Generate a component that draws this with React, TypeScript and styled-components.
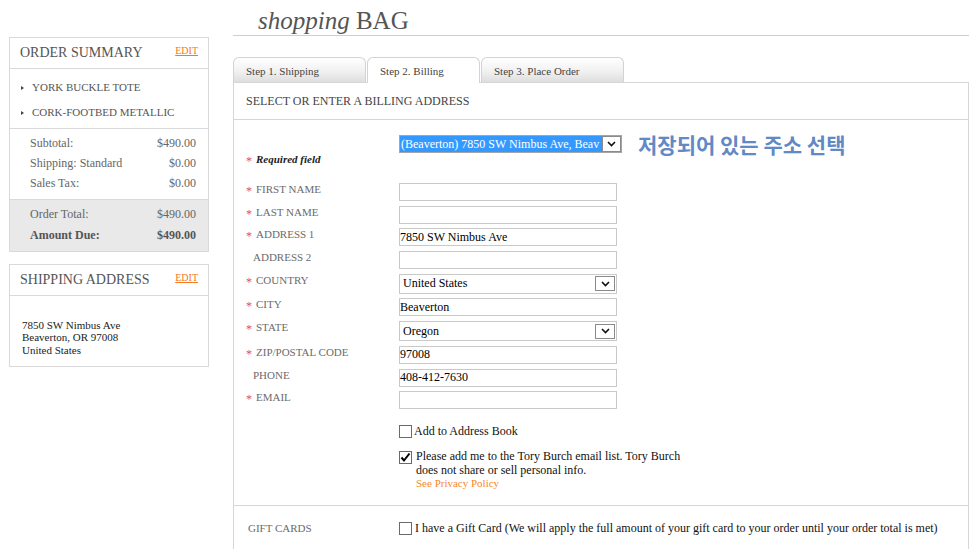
import React from "react";
import styled, { createGlobalStyle } from "styled-components";

const Global = createGlobalStyle`
  html, body { margin: 0; padding: 0; background: #fff; }
  body { font-family: "Liberation Serif", "Times New Roman", serif; color: #555; }
  * { box-sizing: border-box; }
`;

const Page = styled.div`
  display: flex;
  align-items: flex-start;
  gap: 24px;
  padding-left: 9px;
  width: 970px;
  height: 549px;
  overflow: hidden;
`;

/* ---------- Sidebar ---------- */
const Sidebar = styled.aside`
  width: 200px;
  flex: none;
  margin-top: 37px;
  display: flex;
  flex-direction: column;
  gap: 12px;
`;

const Card = styled.section`
  border: 1px solid #d9d9d9;
  background: #fff;
`;

const CardHeader = styled.div`
  height: 31px;
  border-bottom: 1px solid #d9d9d9;
  display: flex;
  justify-content: space-between;
  align-items: flex-start;
  padding: 0 10px;
`;

const CardTitle = styled.h2`
  margin: 0;
  font-weight: normal;
  font-size: 14px;
  line-height: 30px;
  color: #555;
`;

const EditLink = styled.a`
  font-size: 10px;
  line-height: 12px;
  margin-top: 7px;
  color: #f47920;
  text-decoration: underline;
`;

const ItemList = styled.ul`
  list-style: none;
  margin: 0;
  padding: 6px 0 3px 11px;
  border-bottom: 1px solid #d9d9d9;
`;

const Item = styled.li`
  display: flex;
  align-items: center;
  gap: 8px;
  font-size: 11px;
  line-height: 25px;
  color: #555;
`;

const Bullet = styled.span`
  width: 0;
  height: 0;
  border-left: 3px solid #444;
  border-top: 2.5px solid transparent;
  border-bottom: 2.5px solid transparent;
`;

const Totals = styled.div<{ $shade?: boolean }>`
  padding: ${(p) => (p.$shade ? "4px 12px 5px 20px" : "4px 12px 6px 20px")};
  background: ${(p) => (p.$shade ? "#e9e9e9" : "#fff")};
  border-bottom: ${(p) => (p.$shade ? "none" : "1px solid #d9d9d9")};
`;

const TotalRow = styled.div<{ $strong?: boolean; $tall?: boolean }>`
  display: flex;
  justify-content: space-between;
  font-size: 12px;
  line-height: ${(p) => (p.$tall ? "21px" : "20px")};
  font-weight: ${(p) => (p.$strong ? "bold" : "normal")};
  color: ${(p) => (p.$strong ? "#555" : "#666")};
`;

const AddressBody = styled.div`
  padding: 23px 12px 10px;
  font-size: 11px;
  line-height: 12.4px;
  color: #222;
`;

/* ---------- Main ---------- */
const Main = styled.main`
  width: 736px;
  flex: none;
`;

const TitleBar = styled.div`
  height: 36px;
  border-bottom: 1px solid #cfcfcf;
  display: flex;
  align-items: flex-end;
  padding: 0 0 2px 25px;
`;

const Title = styled.h1`
  margin: 0;
  font-weight: normal;
  font-size: 25px;
  line-height: 25px;
  color: #555;
  em { font-style: italic; }
`;

const TabRow = styled.div`
  margin-top: 21px;
  height: 25px;
  display: flex;
  align-items: flex-start;
  gap: 1px;
`;

const Tab = styled.div<{ $w: number; $active?: boolean }>`
  width: ${(p) => p.$w}px;
  height: ${(p) => (p.$active ? 26 : 25)}px;
  border: 1px solid #d3d3d3;
  border-bottom: none;
  border-radius: 6px 6px 0 0;
  background: ${(p) =>
    p.$active ? "#fff" : "linear-gradient(#ffffff, #f1f1f1 55%, #dedede)"};
  position: relative;
  z-index: ${(p) => (p.$active ? 1 : 0)};
  padding: 7px 0 0 12px;
  font-size: 11px;
  line-height: 13px;
  color: #444;
  white-space: nowrap;
`;

const Panel = styled.div`
  border: 1px solid #d6d6d6;
  background: #fff;
`;

const PanelHeader = styled.div`
  height: 37px;
  border-bottom: 1px solid #d6d6d6;
  padding-left: 12px;
  font-size: 12px;
  line-height: 36px;
  color: #444;
`;

const FormSection = styled.div`
  padding: 15px 0 14px 12px;
`;

const FieldRow = styled.div<{ $gap?: number }>`
  display: grid;
  grid-template-columns: 153px 1fr;
  align-items: start;
  margin-top: ${(p) => p.$gap ?? 0}px;
`;

const Picker = styled.div`
  display: flex;
  align-items: flex-start;
`;

const AddressSelect = styled.div`
  flex: none;
  width: 223px;
  height: 18px;
  border: 1px solid #a5a5a5;
  display: flex;
  background: #fff;
  overflow: hidden;
`;

const Highlight = styled.div`
  flex: 1;
  min-width: 0;
  background: #3399ff;
  color: #fff;
  font-size: 12px;
  line-height: 16px;
  padding-left: 1px;
  white-space: nowrap;
  overflow: hidden;
`;

const ArrowBox = styled.span<{ $w: number; $h: number }>`
  flex: none;
  width: ${(p) => p.$w}px;
  height: ${(p) => p.$h}px;
  border: 1px solid #8a8a8a;
  background: #fff;
  display: flex;
  align-items: center;
  justify-content: center;
`;

const Note = styled.span`
  margin: -3px 0 -3px 16px;
  font-family: "Noto Sans CJK KR", "Noto Sans", sans-serif;
  font-weight: bold;
  font-size: 21px;
  line-height: 24px;
  color: #6089c6;
  white-space: nowrap;
`;

const RequiredNote = styled.div`
  display: flex;
  margin-bottom: 15px;
  font-size: 11px;
  line-height: 13px;
  font-weight: bold;
  font-style: italic;
  color: #222;
`;

const Star = styled.span`
  flex: none;
  width: 10px;
  padding-top: 2px;
  font-style: normal;
  font-weight: normal;
  font-size: 12px;
  line-height: 13px;
  color: #e0457b;
`;

const Spacer = styled.span`
  flex: none;
  width: 7px;
`;

const FieldList = styled.div`
  display: flex;
  flex-direction: column;
  gap: 4.7px;
`;

const Label = styled.label`
  display: flex;
  font-size: 11px;
  line-height: 13px;
  color: #6b6b6b;
  white-space: nowrap;
`;

const TextInput = styled.input`
  width: 218px;
  height: 18px;
  border: 1px solid #c9c9c9;
  padding: 0;
  margin: 0;
  font-family: "Liberation Serif", "Times New Roman", serif;
  font-size: 12px;
  color: #000;
  background: #fff;
  outline: none;
`;

const SelectBox = styled.div`
  width: 218px;
  height: 20px;
  border: 1px solid #c9c9c9;
  display: flex;
  align-items: center;
  justify-content: space-between;
  padding: 0 1px 0 3px;
  font-size: 12px;
  color: #000;
  background: #fff;
`;

const OptionList = styled.div`
  display: flex;
  flex-direction: column;
  gap: 13px;
`;

const OptionItem = styled.label<{ $top?: boolean; $gap?: number }>`
  display: flex;
  align-items: ${(p) => (p.$top ? "flex-start" : "center")};
  gap: ${(p) => p.$gap ?? 2}px;
  font-size: 12px;
  line-height: 13px;
  color: #111;
`;

const Box = styled.span`
  flex: none;
  width: 13px;
  height: 13px;
  border: 1px solid #6a6a6a;
  background: #fff;
  display: flex;
  align-items: center;
  justify-content: center;
`;

const OptionText = styled.span`
  width: 275px;
  margin-top: -0.5px;
  line-height: 13.5px;
`;

const Privacy = styled.a`
  display: block;
  font-size: 11px;
  color: #f58a1f;
  text-decoration: none;
`;

const GiftSection = styled.div`
  border-top: 1px solid #d6d6d6;
  padding: 16px 0 60px 14px;
  display: grid;
  grid-template-columns: 151px 1fr;
  align-items: center;
`;

const GiftLabel = styled.span`
  font-size: 11px;
  line-height: 13px;
  color: #6b6b6b;
`;

const Chevron = () => (
  <svg width="9" height="6" viewBox="0 0 9 6">
    <path d="M1 1 L4.5 4.5 L8 1" fill="none" stroke="#111" strokeWidth="1.6" />
  </svg>
);

const Check = ({ checked }: { checked?: boolean }) => (
  <Box>
    {checked && (
      <svg width="11" height="11" viewBox="0 0 11 11">
        <path d="M1.5 5.5 L4 8.5 L9.5 1.5" fill="none" stroke="#000" strokeWidth="2" />
      </svg>
    )}
  </Box>
);

type Field = { label: string; req: boolean; value?: string; select?: boolean };

const fields: Field[] = [
  { label: "FIRST NAME", req: true },
  { label: "LAST NAME", req: true },
  { label: "ADDRESS 1", req: true, value: "7850 SW Nimbus Ave" },
  { label: "ADDRESS 2", req: false },
  { label: "COUNTRY", req: true, value: "United States", select: true },
  { label: "CITY", req: true, value: "Beaverton" },
  { label: "STATE", req: true, value: "Oregon", select: true },
  { label: "ZIP/POSTAL CODE", req: true, value: "97008" },
  { label: "PHONE", req: false, value: "408-412-7630" },
  { label: "EMAIL", req: true },
];

export default function App() {
  return (
    <>
      <Global />
      <Page>
        <Sidebar>
          <Card>
            <CardHeader>
              <CardTitle>ORDER SUMMARY</CardTitle>
              <EditLink>EDIT</EditLink>
            </CardHeader>
            <ItemList>
              <Item><Bullet />YORK BUCKLE TOTE</Item>
              <Item><Bullet />CORK-FOOTBED METALLIC</Item>
            </ItemList>
            <Totals>
              <TotalRow><span>Subtotal:</span><span>$490.00</span></TotalRow>
              <TotalRow><span>Shipping: Standard</span><span>$0.00</span></TotalRow>
              <TotalRow><span>Sales Tax:</span><span>$0.00</span></TotalRow>
            </Totals>
            <Totals $shade>
              <TotalRow $tall><span>Order Total:</span><span>$490.00</span></TotalRow>
              <TotalRow $tall $strong><span>Amount Due:</span><span>$490.00</span></TotalRow>
            </Totals>
          </Card>
          <Card>
            <CardHeader>
              <CardTitle>SHIPPING ADDRESS</CardTitle>
              <EditLink>EDIT</EditLink>
            </CardHeader>
            <AddressBody>
              7850 SW Nimbus Ave<br />
              Beaverton, OR 97008<br />
              United States
            </AddressBody>
          </Card>
        </Sidebar>

        <Main>
          <TitleBar>
            <Title><em>shopping</em> BAG</Title>
          </TitleBar>
          <TabRow>
            <Tab $w={133}>Step 1. Shipping</Tab>
            <Tab $w={113} $active>Step 2. Billing</Tab>
            <Tab $w={143}>Step 3. Place Order</Tab>
          </TabRow>
          <Panel>
            <PanelHeader>SELECT OR ENTER A BILLING ADDRESS</PanelHeader>
            <FormSection>
              <FieldRow>
                <span />
                <Picker>
                  <AddressSelect>
                    <Highlight>(Beaverton) 7850 SW Nimbus Ave, Beav</Highlight>
                    <ArrowBox $w={19} $h={16}><Chevron /></ArrowBox>
                  </AddressSelect>
                  <Note>저장되어 있는 주소 선택</Note>
                </Picker>
              </FieldRow>
              <RequiredNote>
                <Star>*</Star>
                Required field
              </RequiredNote>
              <FieldList>
                {fields.map((f) => (
                  <FieldRow key={f.label}>
                    <Label>
                      {f.req ? <Star>*</Star> : <Spacer />}
                      {f.label}
                    </Label>
                    {f.select ? (
                      <SelectBox>
                        <span>{f.value}</span>
                        <ArrowBox $w={20} $h={15}><Chevron /></ArrowBox>
                      </SelectBox>
                    ) : (
                      <TextInput readOnly defaultValue={f.value ?? ""} />
                    )}
                  </FieldRow>
                ))}
              </FieldList>
              <FieldRow $gap={15.5}>
                <span />
                <OptionList>
                  <OptionItem>
                    <Check />
                    Add to Address Book
                  </OptionItem>
                  <OptionItem $top $gap={4}>
                    <Check checked />
                    <OptionText>
                      Please add me to the Tory Burch email list. Tory Burch does not share or sell personal info.
                      <Privacy>See Privacy Policy</Privacy>
                    </OptionText>
                  </OptionItem>
                </OptionList>
              </FieldRow>
            </FormSection>
            <GiftSection>
              <GiftLabel>GIFT CARDS</GiftLabel>
              <OptionItem $gap={3}>
                <Check />
                <span>I have a Gift Card (We will apply the full amount of your gift card to your order until your order total is met)</span>
              </OptionItem>
            </GiftSection>
          </Panel>
        </Main>
      </Page>
    </>
  );
}
